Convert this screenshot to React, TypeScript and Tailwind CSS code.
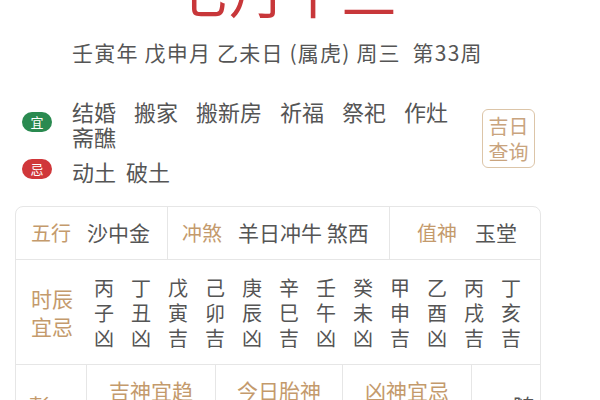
const hours = [
  ['丙', '子', '凶'],
  ['丁', '丑', '凶'],
  ['戊', '寅', '吉'],
  ['己', '卯', '吉'],
  ['庚', '辰', '凶'],
  ['辛', '巳', '吉'],
  ['壬', '午', '凶'],
  ['癸', '未', '凶'],
  ['甲', '申', '吉'],
  ['乙', '酉', '凶'],
  ['丙', '戌', '吉'],
  ['丁', '亥', '吉'],
]

const yiList = ['结婚', '搬家', '搬新房', '祈福', '祭祀', '作灶', '斋醮']

const font = { fontFamily: '"Noto Sans CJK SC", "Noto Sans", sans-serif' }

export default function App() {
  return (
    <div className="h-[400px] w-[600px] overflow-hidden bg-white text-[#555]" style={font}>
      <div className="mt-[-39px] h-[55px] pr-[30px] text-center text-[56px] leading-[55px] text-[#c8373a]">
        七月十三
      </div>

      <div className="mt-[22px] pl-[72px] text-[21px] leading-[28px] tracking-[1.2px] text-[#555]">
        壬寅年 戊申月 乙未日 (属虎) 周三&nbsp; 第33周
      </div>

      <div className="mt-[33px] flex pl-[22px] pr-[65px]">
        <div className="flex-1">
          <div className="flex">
            <span className="mt-[13px] flex h-[20px] w-[30px] shrink-0 items-center justify-center rounded-full bg-[#2a8a50] text-[13px] text-white">
              宜
            </span>
            <div className="ml-[20px] flex w-[390px] flex-wrap gap-x-[18px] text-[22px] leading-[25px] text-[#555]">
              {yiList.map((w) => (
                <span key={w}>{w}</span>
              ))}
            </div>
          </div>
          <div className="mt-[10px] flex">
            <span className="flex h-[20px] w-[30px] shrink-0 items-center justify-center rounded-full bg-[#d0373a] text-[13px] text-white">
              忌
            </span>
            <div className="ml-[20px] flex gap-x-[10px] text-[22px] leading-[25px] text-[#555]">
              <span>动土</span>
              <span>破土</span>
            </div>
          </div>
        </div>
        <div className="mt-[10px] flex h-[59px] w-[53px] flex-col items-center justify-center rounded-[6px] border border-[#dcc5a8] text-[20px] leading-[26px] text-[#c9a47e]">
          <span>吉日</span>
          <span>查询</span>
        </div>
      </div>

      <div className="mx-[15px] mt-[22px] w-[526px] rounded-t-[8px] border border-[#e6e6e6] text-[21px]">
        <div className="flex h-[53px] border-b border-[#e6e6e6]">
          <div className="flex w-[152px] items-center gap-[16px] border-r border-[#e6e6e6] pl-[15px]">
            <span className="text-[20px] text-[#c49a6c]">五行</span>
            <span>沙中金</span>
          </div>
          <div className="flex w-[222px] items-center gap-[16px] border-r border-[#e6e6e6] pl-[14px]">
            <span className="text-[20px] text-[#c49a6c]">冲煞</span>
            <span>羊日冲牛 煞西</span>
          </div>
          <div className="flex flex-1 items-center gap-[18px] pl-[27px]">
            <span className="text-[20px] text-[#c49a6c]">值神</span>
            <span>玉堂</span>
          </div>
        </div>

        <div className="flex h-[105px] items-center border-b border-[#e6e6e6]">
          <div className="w-[78px] pl-[15px] text-[21px] leading-[28px] text-[#c49a6c]">
            <div>时辰</div>
            <div>宜忌</div>
          </div>
          <div className="grid grid-cols-12 gap-x-[17px]">
            {hours.map((col, i) => (
              <div key={i} className="flex w-[20px] flex-col items-center text-[20px] leading-[25px] text-[#555]">
                {col.map((c, j) => (
                  <span key={j}>{c}</span>
                ))}
              </div>
            ))}
          </div>
        </div>

        <div className="flex h-[60px]">
          <div className="w-[71px] border-r border-[#e6e6e6] pl-[13px] pt-[25px] text-[#c49a6c]">彭</div>
          <div className="w-[129px] border-r border-[#e6e6e6] pt-[10px] text-center text-[#c49a6c]">吉神宜趋</div>
          <div className="w-[127px] border-r border-[#e6e6e6] pt-[10px] text-center text-[#c49a6c]">今日胎神</div>
          <div className="w-[129px] border-r border-[#e6e6e6] pt-[10px] text-center text-[#c49a6c]">凶神宜忌</div>
          <div className="flex flex-1 gap-[6px] pl-[14px] pt-[25px]">
            <span className="text-[#c49a6c]">一</span>
            <span>随</span>
          </div>
        </div>
      </div>
    </div>
  )
}
